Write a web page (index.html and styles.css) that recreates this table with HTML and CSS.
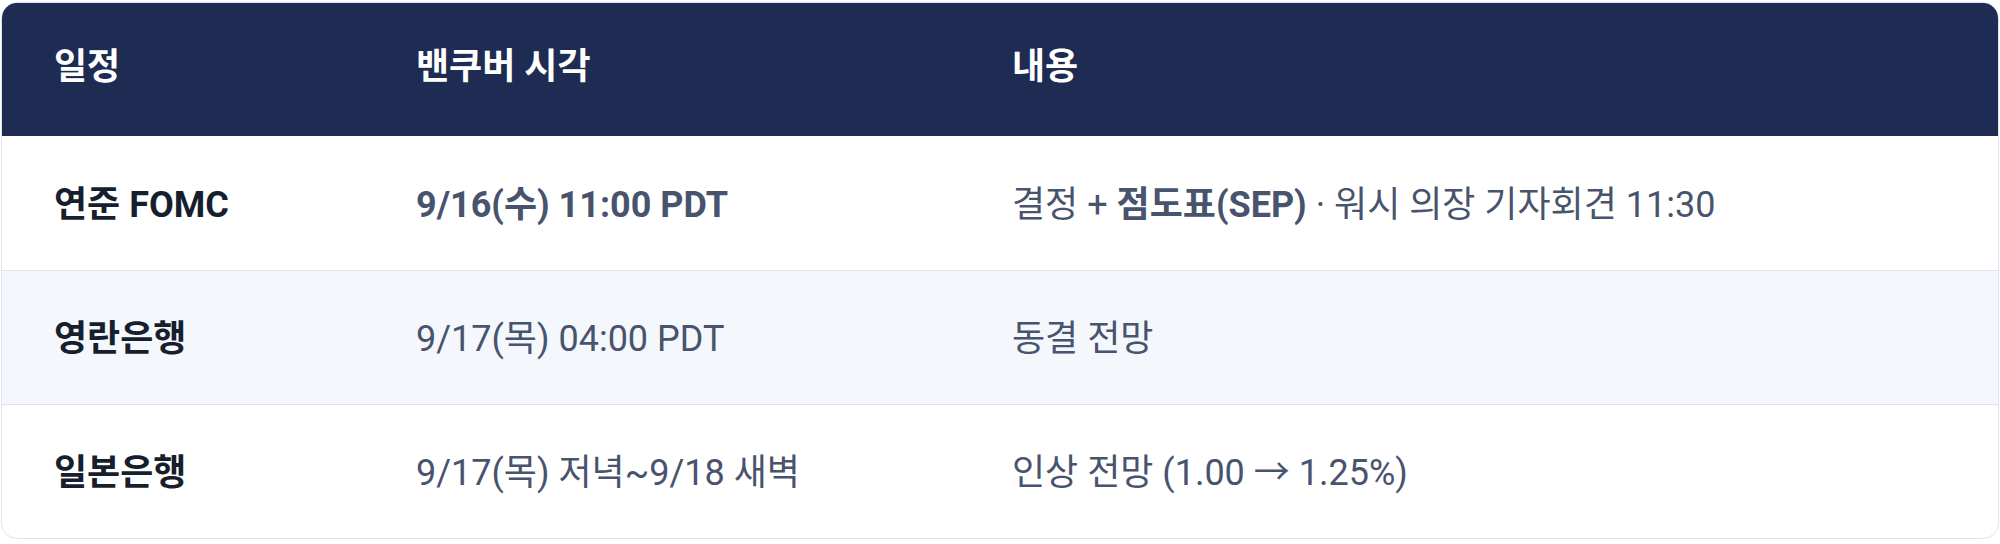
FILE: index.html
```html
<!DOCTYPE html>
<html lang="ko">
<head>
<meta charset="utf-8">
<link rel="stylesheet" href="styles.css">
</head>
<body>
<div class="wrap">
  <div class="card">
    <table class="sched">
      <colgroup>
        <col class="c1"><col class="c2"><col class="c3">
      </colgroup>
      <thead>
        <tr><th>일정</th><th>밴쿠버 시각</th><th>내용</th></tr>
      </thead>
      <tbody>
        <tr>
          <td class="name">연준 FOMC</td>
          <td class="time strong">9/16(수) 11:00 PDT</td>
          <td class="desc">결정 + <b>점도표(SEP)</b> · 워시 의장 기자회견 11:30</td>
        </tr>
        <tr class="alt">
          <td class="name">영란은행</td>
          <td class="time">9/17(목) 04:00 PDT</td>
          <td class="desc">동결 전망</td>
        </tr>
        <tr>
          <td class="name">일본은행</td>
          <td class="time">9/17(목) 저녁~9/18 새벽</td>
          <td class="desc">인상 전망 (1.00 → 1.25%)</td>
        </tr>
      </tbody>
    </table>
  </div>
</div>
</body>
</html>
```
FILE: styles.css
```css
html, body {
  margin: 0;
  padding: 0;
  background: #ffffff;
}
.wrap {
  padding: 2px 1px 2px 1px;
}
.card {
  border: 1px solid #dde4f0;
  border-radius: 16px;
  overflow: hidden;
  background: #ffffff;
}
.sched {
  width: 100%;
  border-collapse: collapse;
  table-layout: fixed;
  font-family: "Roboto", "Noto Sans CJK KR", sans-serif;
  font-size: 36px;
}
.c1 { width: 362px; }
.c2 { width: 596px; }
.sched th {
  background: #1e2b52;
  color: #ffffff;
  font-size: 36px;
  font-weight: 700;
  text-align: left;
  height: 133px;
  padding: 0 0 14px 52px;
  box-sizing: border-box;
  vertical-align: middle;
}
.sched td {
  height: 134px;
  padding: 0 0 4px 52px;
  box-sizing: border-box;
  vertical-align: middle;
  color: #48536d;
  border-top: 1px solid #dde4f0;
}
.sched tbody tr:first-child td { border-top: none; }
.sched tr.alt td { background: #f4f7fc; }
.sched td.name {
  color: #171f2e;
  font-weight: 700;
}
.sched td.strong { font-weight: 700; }
.sched td.desc b { font-weight: 700; }
```
